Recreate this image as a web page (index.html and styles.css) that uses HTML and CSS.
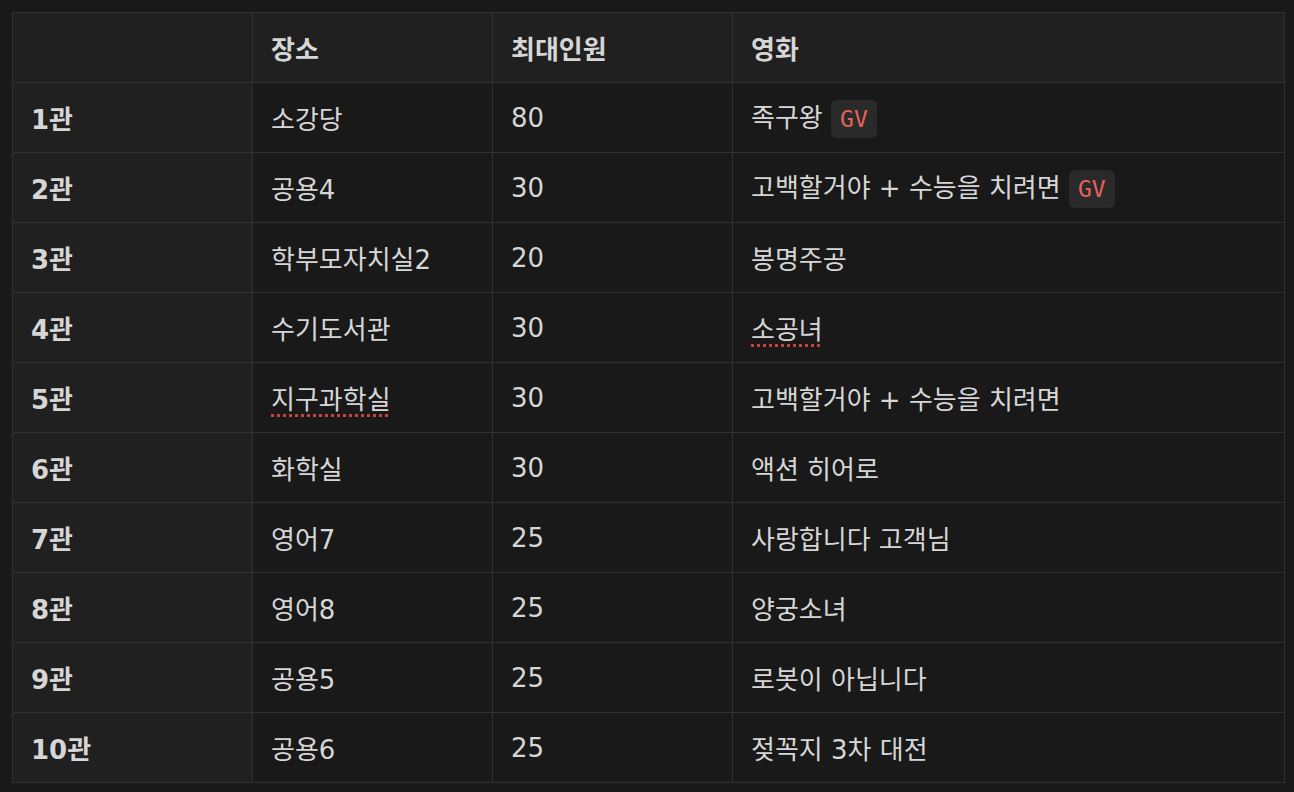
FILE: index.html
```html
<!DOCTYPE html>
<html lang="ko">
<head>
  <meta charset="UTF-8">
  <title>상영관</title>
  <link rel="stylesheet" href="styles.css">
</head>
<body>
  <table class="sheet">
    <colgroup>
      <col class="col-narrow">
      <col class="col-narrow">
      <col class="col-narrow">
      <col>
    </colgroup>
    <thead>
      <tr>
        <th></th>
        <th>장소</th>
        <th>최대인원</th>
        <th>영화</th>
      </tr>
    </thead>
    <tbody>
      <tr>
        <th>1관</th>
        <td>소강당</td>
        <td>80</td>
        <td>족구왕 <code class="tag">GV</code></td>
      </tr>
      <tr>
        <th>2관</th>
        <td>공용4</td>
        <td>30</td>
        <td>고백할거야 + 수능을 치려면 <code class="tag">GV</code></td>
      </tr>
      <tr>
        <th>3관</th>
        <td>학부모자치실2</td>
        <td>20</td>
        <td>봉명주공</td>
      </tr>
      <tr>
        <th>4관</th>
        <td>수기도서관</td>
        <td>30</td>
        <td><span class="typo">소공녀</span></td>
      </tr>
      <tr>
        <th>5관</th>
        <td><span class="typo">지구과학실</span></td>
        <td>30</td>
        <td>고백할거야 + 수능을 치려면</td>
      </tr>
      <tr>
        <th>6관</th>
        <td>화학실</td>
        <td>30</td>
        <td>액션 히어로</td>
      </tr>
      <tr>
        <th>7관</th>
        <td>영어7</td>
        <td>25</td>
        <td>사랑합니다 고객님</td>
      </tr>
      <tr>
        <th>8관</th>
        <td>영어8</td>
        <td>25</td>
        <td>양궁소녀</td>
      </tr>
      <tr>
        <th>9관</th>
        <td>공용5</td>
        <td>25</td>
        <td>로봇이 아닙니다</td>
      </tr>
      <tr>
        <th>10관</th>
        <td>공용6</td>
        <td>25</td>
        <td>젖꼭지 3차 대전</td>
      </tr>
    </tbody>
  </table>
</body>
</html>
```

FILE: styles.css
```css
body {
  margin: 0;
  padding: 12px;
  background: #191919;
  color: #d6d6d6;
  font-family: "DejaVu Sans", "Noto Sans CJK KR", sans-serif;
  font-size: 26px;
}

.sheet {
  width: 1273px;
  border-collapse: collapse;
  table-layout: fixed;
  border: 1px solid #313131;
}

.col-narrow {
  width: 240px;
}

.sheet th,
.sheet td {
  height: 69px;
  padding: 0 18px;
  border: 1px solid #313131;
  text-align: left;
  vertical-align: middle;
  font-weight: 400;
  white-space: nowrap;
}

.sheet thead th,
.sheet tbody th {
  background: #202020;
  font-weight: 600;
}

.sheet td {
  background: #191919;
}

.tag {
  display: inline-block;
  padding: 3px 9px;
  border-radius: 6px;
  background: #2a2a2a;
  color: #e5625a;
  font-family: "DejaVu Sans Mono", "Liberation Mono", monospace;
  font-size: 23px;
  line-height: 32px;
  vertical-align: middle;
}

.typo {
  text-decoration: underline dotted #c8433b;
  text-decoration-thickness: 3px;
  text-underline-offset: 5px;
}
```
